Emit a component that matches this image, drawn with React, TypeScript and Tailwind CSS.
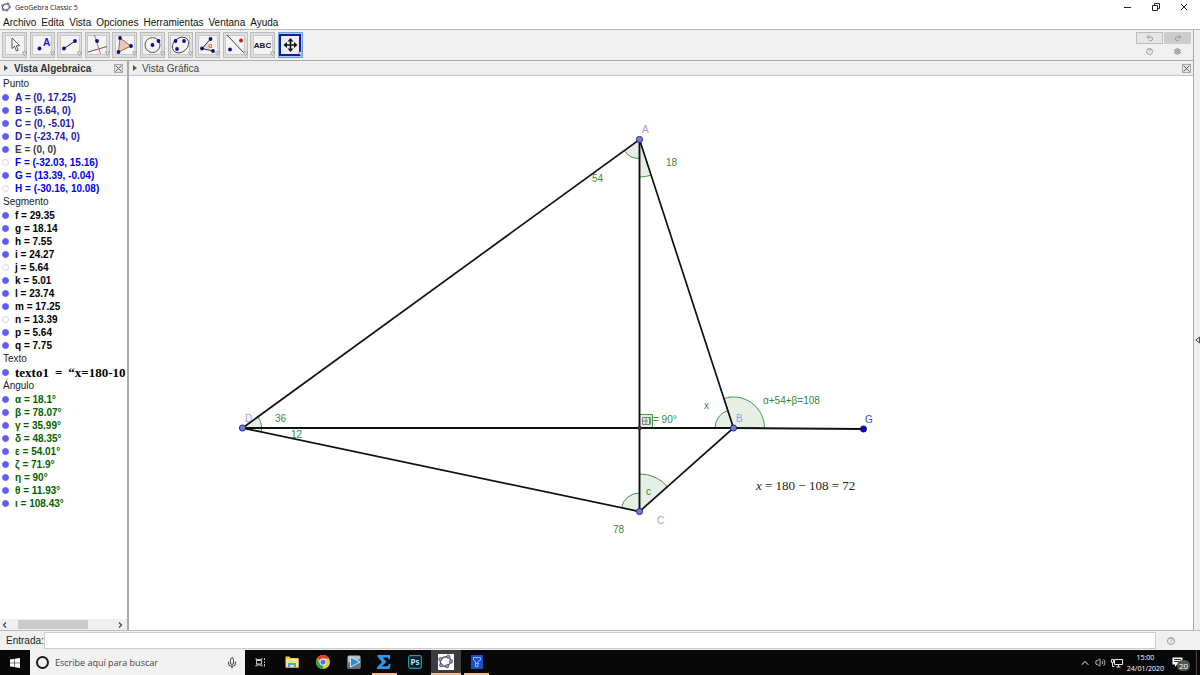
import React from "react";
import { ChevronUp, Mic, Redo2, Settings, Undo2, Volume2 } from "lucide-react";

type Item = { name: string; value: string; hidden?: boolean; color?: string };
type Group = { title: string; color: string; items: Item[] };

const groups: Group[] = [
  {
    title: "Punto",
    color: "text-[#2020a8]",
    items: [
      { name: "A", value: "(0, 17.25)" },
      { name: "B", value: "(5.64, 0)" },
      { name: "C", value: "(0, -5.01)" },
      { name: "D", value: "(-23.74, 0)" },
      { name: "E", value: "(0, 0)", color: "text-[#404040]" },
      { name: "F", value: "(-32.03, 15.16)", hidden: true, color: "text-[#0000f5]" },
      { name: "G", value: "(13.39, -0.04)", color: "text-[#0000f5]" },
      { name: "H", value: "(-30.16, 10.08)", hidden: true, color: "text-[#0000f5]" },
    ],
  },
  {
    title: "Segmento",
    color: "text-black",
    items: [
      { name: "f", value: "29.35" },
      { name: "g", value: "18.14" },
      { name: "h", value: "7.55" },
      { name: "i", value: "24.27" },
      { name: "j", value: "5.64", hidden: true },
      { name: "k", value: "5.01" },
      { name: "l", value: "23.74" },
      { name: "m", value: "17.25" },
      { name: "n", value: "13.39", hidden: true },
      { name: "p", value: "5.64" },
      { name: "q", value: "7.75" },
    ],
  },
  { title: "Texto", color: "text-black", items: [{ name: "texto1", value: "“x=180-10" }] },
  {
    title: "Ángulo",
    color: "text-[#006400]",
    items: [
      { name: "α", value: "18.1°" },
      { name: "β", value: "78.07°" },
      { name: "γ", value: "35.99°" },
      { name: "δ", value: "48.35°" },
      { name: "ε", value: "54.01°" },
      { name: "ζ", value: "71.9°" },
      { name: "η", value: "90°" },
      { name: "θ", value: "11.93°" },
      { name: "ι", value: "108.43°" },
    ],
  },
];

const Dot = ({ x, y, fill = "#0c0c8c" }: { x: number; y: number; fill?: string }) => (
  <circle cx={x} cy={y} r={1.9} fill={fill} />
);

const tools: { label: string; icon: React.ReactNode }[] = [
  {
    label: "Elige y mueve",
    icon: <path d="M10 6v10.5l2.5-2.2 2 4.7 1.8-.8-2-4.5h3.4z" fill="#fff" stroke="#444" strokeWidth={0.9} />,
  },
  {
    label: "Punto",
    icon: (
      <>
        <Dot x={9.5} y={16.5} />
        <text x={13} y={14} fontSize={10} fontWeight={700} fill="#1414ff">A</text>
      </>
    ),
  },
  {
    label: "Recta",
    icon: (
      <>
        <path d="M7 16.5 18 9" stroke="#222" />
        <Dot x={7} y={16.5} />
        <Dot x={18} y={9} />
      </>
    ),
  },
  {
    label: "Perpendicular",
    icon: (
      <>
        <path d="M3 20 22 14.5" stroke="#555" />
        <path d="M9.5 3 15.5 22" stroke="#f06060" />
        <Dot x={12} y={9} />
      </>
    ),
  },
  {
    label: "Polígono",
    icon: (
      <>
        <path d="M8 6 19 14 6.500 20z" fill="#ecc9b4" stroke="#a5674a" />
        <Dot x={8} y={6} />
        <Dot x={19} y={14} />
        <Dot x={6.5} y={20} />
      </>
    ),
  },
  {
    label: "Circunferencia",
    icon: (
      <>
        <circle cx={12.5} cy={13} r={7.5} fill="none" stroke="#444" strokeWidth={0.9} />
        <Dot x={12.5} y={13} />
        <Dot x={18.5} y={9} />
      </>
    ),
  },
  {
    label: "Elipse",
    icon: (
      <>
        <ellipse cx={12.5} cy={13} rx={9} ry={7} transform="rotate(-40 12.500 13)" fill="none" stroke="#444" strokeWidth={0.9} />
        <Dot x={7.5} y={9} />
        <Dot x={16} y={9} />
        <Dot x={9} y={17} />
      </>
    ),
  },
  {
    label: "Ángulo",
    icon: (
      <>
        <path d="M7 16.500 13 10.500Q17 13 15.500 18z" fill="#fbd0d0" />
        <path d="M15.500 7 7 16.500 18 19" fill="none" stroke="#333" />
        <text x={13.5} y={16} fontSize={7} fill="#f03030">α</text>
        <Dot x={15.5} y={7} />
        <Dot x={7} y={16.5} />
        <Dot x={18} y={19} />
      </>
    ),
  },
  {
    label: "Simetría",
    icon: (
      <>
        <path d="M4 3 21 21" stroke="#444" />
        <Dot x={7} y={17.5} />
        <Dot x={18} y={8.5} fill="#c81818" />
      </>
    ),
  },
  {
    label: "Texto",
    icon: <text x={12.5} y={16} fontSize={8} fontWeight={700} textAnchor="middle" fill="#111">ABC</text>,
  },
  {
    label: "Desplaza vista gráfica",
    icon: (
      <path
        d="M12.500 6 15.500 9.500H13.300V12.200H16V10L19.500 13 16 16V13.800H13.300V16.500H15.500L12.500 20 9.500 16.500H11.700V13.800H9V16L5.500 13 9 10V12.200H11.700V9.500H9.500z"
        fill="#111"
      />
    ),
  },
];

function GeoLogo({ className }: { className: string }) {
  return (
    <svg viewBox="0 0 16 16" className={className} aria-hidden="true">
      <ellipse cx="8" cy="8" rx="5.800" ry="4.900" transform="rotate(-25 8 8)" fill="none" stroke="#555" strokeWidth="1.500" />
      {[[11, 2.8], [14, 8], [9.6, 13], [3.4, 12], [2.6, 5.6]].map(([x, y]) => (
        <circle key={x} cx={x} cy={y} r="1.800" fill="#9090e8" stroke="#444" strokeWidth="0.700" />
      ))}
    </svg>
  );
}

function CloseBox({ label }: { label: string }) {
  return (
    <button aria-label={label} className="flex h-[9px] w-[9px] items-center justify-center border border-[#aaa] bg-[#e4e4e4]">
      <svg viewBox="0 0 7 7" className="h-[7px] w-[7px]"><path d="M.5.5l6 6M6.500.5l-6 6" stroke="#666" /></svg>
    </button>
  );
}

function PanelArrow() {
  return <svg viewBox="0 0 4 6" className="h-[6px] w-1 shrink-0" aria-hidden="true"><path d="M0 0 4 3 0 6z" fill="#555" /></svg>;
}

function AlgebraView() {
  return (
    <aside className="flex w-[127px] shrink-0 flex-col bg-white">
      <header className="flex h-[15px] items-center border-b border-[#c4c4c4] bg-[#eee] pl-1 pr-1">
        <PanelArrow />
        <h2 className="ml-1.5 grow whitespace-nowrap font-bold text-[#333]">Vista Algebraica</h2>
        <CloseBox label="Cerrar Vista Algebraica" />
      </header>
      <div className="grow overflow-hidden pt-px">
        {groups.map((g) => (
          <section key={g.title}>
            <h3 className="h-[14px] pl-[3px] leading-[14px] text-[#222]">{g.title}</h3>
            <ul>
              {g.items.map((it) => (
                <li key={it.name} className={`flex h-[13px] items-center whitespace-nowrap font-bold leading-[13px] ${it.color ?? g.color}`}>
                  <span className={`ml-0.5 mr-1.5 h-[7px] w-[7px] shrink-0 rounded-full border ${it.hidden ? "border-[#d4d4d4] bg-white" : "border-[#6464f8] bg-[#5c5cff]"}`} />
                  {g.title === "Texto" ? (
                    <span className="flex gap-1.5 font-['Liberation_Serif',serif] text-[13px]">
                      <span>{it.name}</span>
                      <span>=</span>
                      <span>{it.value}</span>
                    </span>
                  ) : (
                    <span>{it.name} = {it.value}</span>
                  )}
                </li>
              ))}
            </ul>
          </section>
        ))}
      </div>
      <div className="flex h-[11px] items-center bg-[#f0f0f0] px-0.5">
        <svg viewBox="0 0 5 6" className="h-[6px] w-[5px]"><path d="M4 .5 1.500 3 4 5.500" fill="none" stroke="#444" strokeWidth="1.200" /></svg>
        <div className="mx-[11px] h-[9px] grow pr-[19px]"><div className="h-full bg-[#cbcbcb]" /></div>
        <svg viewBox="0 0 5 6" className="mr-0.5 h-[6px] w-[5px]"><path d="M1 .5 3.500 3 1 5.500" fill="none" stroke="#444" strokeWidth="1.200" /></svg>
      </div>
    </aside>
  );
}

function Graph() {
  return (
    <svg className="block h-full w-full" role="img" aria-label="Construcción geométrica" fontSize={10}>
      <g transform="translate(-129 -76)">
        <g fill="#006400" fillOpacity={0.1} stroke="#3f9a48" strokeWidth={1}>
          <path d="M639.500 139.500 624.100 150.700A19 19 0 0 0 639.500 158.500z" />
          <path d="M639.500 139.500V177A37.500 37.500 0 0 0 651.100 175.200z" />
          <path d="M242.500 428 257.900 416.800A19 19 0 0 1 261.100 431.900z" />
          <path d="M639.500 511.500 621.400 507.700A18.500 18.500 0 0 1 639.500 493z" />
          <path d="M639.500 511.500V474A37.500 37.500 0 0 1 667.500 486.600z" />
          <path d="M733.500 428H715A18.500 18.500 0 0 1 727.800 410.400z" />
          <path d="M733.500 428 723.900 398.500A31 31 0 0 1 764.500 428z" />
          <path d="M639.500 414.500H652.500V428H639.500z" />
        </g>
        <g stroke="#111" strokeWidth={1.7} fill="none">
          <path d="M242.500 428 639.500 139.500 733.500 428 639.500 511.500z" />
          <path d="M639.500 139.500V511.500M242.500 428H733.500L863.500 429" strokeWidth={1.9} />
        </g>
        <g fill="#7474f4" stroke="#22224c" strokeWidth={0.9}>
          <circle cx={639.5} cy={139.5} r={3.1} />
          <circle cx={733.5} cy={428} r={3.1} />
          <circle cx={639.5} cy={511.5} r={3.1} />
          <circle cx={242.5} cy={428} r={3.1} />
          <circle cx={863.5} cy={429} r={3.1} fill="#0000f0" />
          <circle cx={639.5} cy={428} r={1.8} fill="#444" />
        </g>
        <g fill="#9c9cf8">
          <text x={642} y={133}>A</text>
          <text x={736} y={422}>B</text>
          <text x={657} y={524}>C</text>
          <text x={245} y={422}>D</text>
          <text x={865} y={423} fill="#4040f0">G</text>
        </g>
        <path d="M642.500 417.500H649.500V424.500H642.500zM642.500 421H648M646 418V424.500" fill="none" stroke="#777" strokeWidth={0.9} />
        <path d="M648 417.500H650.500V424.500" fill="none" stroke="#358a3c" strokeWidth={0.8} />
        <g fill="#358a3c">
          <text x={592} y={182}>54</text>
          <text x={666} y={166}>18</text>
          <text x={275} y={422}>36</text>
          <text x={291} y={438}>12</text>
          <text x={613} y={533}>78</text>
          <text x={704} y={409}>x</text>
          <text x={646} y={495}>c</text>
          <text x={653} y={423}>= 90°</text>
          <text x={763} y={404}>α+54+β=108</text>
        </g>
        <text x={756} y={490} fontSize={13} fill="#222" fontFamily="'Liberation Serif', serif">
          <tspan fontStyle="italic">x</tspan> = 180 − 108 = 72
        </text>
      </g>
    </svg>
  );
}

const taskIcons: { label: string; state?: "open" | "active"; icon: React.ReactNode }[] = [
  {
    label: "Vista de tareas",
    icon: <path d="M3 4v1.500h6V4M3 12.500V11h6v1.500M3.500 6.500h5v3.500h-5zM11.500 4v2M11.500 7.500v1.500M11.500 10v2.500" fill="none" stroke="#ddd" strokeWidth="0.900" />,
  },
  {
    label: "Explorador",
    icon: (
      <>
        <path d="M1.500 2.500h4l1 1.500h8v9.500h-13z" fill="#f4c64e" />
        <path d="M2 5h12.500v8.500H2z" fill="#fce08c" />
        <path d="M4 13.500V9h8v4.500h-2.200v-2.500H6.200v2.500z" fill="#37a9e4" />
      </>
    ),
  },
  {
    label: "Chrome",
    icon: (
      <>
        <circle cx="8" cy="8" r="7" fill="#f5c52c" />
        <path d="M8 8 1.900 4.500A7 7 0 0 1 14.100 4.500H8z" fill="#e0402f" />
        <path d="M8 8 8 15A7 7 0 0 1 1.900 4.500L5 9.700z" fill="#32a350" />
        <circle cx="8" cy="8" r="3.400" fill="#fff" />
        <circle cx="8" cy="8" r="2.600" fill="#3f7fe8" />
      </>
    ),
  },
  {
    label: "Reproductor",
    icon: (
      <>
        <rect x="1.500" y="1.500" width="13" height="13" rx="1.500" fill="#b8bec2" />
        <path d="M1.500 9 14.500 5v9.500h-13z" fill="#69757b" />
        <path d="M4.500 3 14 8 4.500 13z" fill="#2390cf" stroke="#dff2ff" strokeWidth="0.900" />
      </>
    ),
  },
  {
    label: "Sigma",
    state: "open",
    icon: <path d="M1.500 1h12.500v4.200h-1.300L11.500 3.500H6.800L10.500 8l-4.800 4.300h5.800l1.500-2.300H14.700l-1.200 5H1v-1.700L6 8 1.500 2.700z" fill="#2d96e8" />,
  },
  {
    label: "Photoshop",
    icon: (
      <>
        <rect x="1.700" y="1.700" width="12.600" height="12.600" rx="1" fill="#06202e" stroke="#22b6d4" />
        <text x="8" y="11" textAnchor="middle" fontSize="8" fontWeight="700" fill="#a8ecf8">Ps</text>
      </>
    ),
  },
  { label: "GeoGebra", state: "active", icon: null },
  {
    label: "Calculadora",
    state: "open",
    icon: (
      <>
        <rect x="2" y="1" width="12" height="14" fill="#1550c8" />
        <path d="M4.500 6V3.500h7V6L9 7.500V12.500H6.500V7.500zM6 9.500h4" fill="none" stroke="#8fb8ff" />
      </>
    ),
  },
];

function Taskbar() {
  return (
    <footer className="flex h-[25px] shrink-0 bg-[#080808] font-['Open_Sans',sans-serif] text-white">
      <button aria-label="Inicio" className="flex w-[30px] items-center justify-center">
        <svg viewBox="0 0 10 10" className="h-[10px] w-[10px]"><path d="M0 1.400 4.500.8v3.900H0zM5 .7 10 0v4.700H5zM0 5.200h4.500v3.900L0 8.500zM5 5.200h5V10L5 9.300z" fill="#fff" /></svg>
      </button>
      <label className="flex w-[215px] items-center bg-[#f2f2f2] px-[6px]">
        <span className="h-[13px] w-[13px] shrink-0 rounded-full border-2 border-[#1a1a1a]" />
        <input aria-label="Buscar" placeholder="Escribe aquí para buscar" className="ml-[6px] h-4 min-w-0 grow bg-transparent text-[9px] outline-none placeholder:text-[#444]" />
        <Mic className="mr-px h-3 w-3 text-[#444]" />
      </label>
      <nav className="flex w-[247px] pl-px">
        {taskIcons.map((t) => (
          <button
            key={t.label}
            aria-label={t.label}
            className={`flex flex-1 flex-col items-center justify-between ${t.state === "active" ? "bg-[#3c3c3c]" : ""}`}
          >
            <span className="flex w-full grow items-center justify-center">
              {t.state === "active" ? (
                <span className="flex h-4 w-4 items-center justify-center bg-white"><GeoLogo className="h-[15px] w-[15px]" /></span>
              ) : (
                <svg viewBox="0 0 16 16" className="h-4 w-4">{t.icon}</svg>
              )}
            </span>
            <span className={`h-0.5 ${t.state === "active" ? "w-full" : "w-[25px]"} ${t.state ? "bg-[#f3c08c]" : ""}`} />
          </button>
        ))}
      </nav>
      <div className="ml-auto flex items-center">
        <ChevronUp className="mr-1 h-3 w-3" />
        <Volume2 className="mr-[5px] h-[11px] w-[11px]" strokeWidth={1.6} />
        <svg viewBox="0 0 12 10" className="mr-1 h-[10px] w-3"><path d="M3.500 1.500h8v5h-8zM5.500 9h4M7.500 6.500V9M.5 1.500h2v3h-2zM1.500 4.500v4h2" fill="none" stroke="#e8e8e8" /></svg>
        <div className="text-center text-[7px] leading-[11px]"><p>15:00</p><p>24/01/2020</p></div>
        <button aria-label="Notificaciones" className="relative ml-2 h-4 w-[18px]">
          <svg viewBox="0 0 12 11" className="h-[11px] w-3"><path d="M.5.5h10v7H5L3 10V7.500H.5z" fill="#fff" /><path d="M2 2.500h7M2 4.500h7" stroke="#333" /></svg>
          <span className="absolute bottom-0 right-0 flex h-[11px] w-[13px] items-center justify-center rounded-full bg-[#555] text-[8px] leading-[11px]">20</span>
        </button>
        <span className="ml-1.5 h-[25px] w-1 border-l border-[#444]" />
      </div>
    </footer>
  );
}

export default function App() {
  return (
    <div className="flex h-screen flex-col overflow-hidden bg-[#f0f0f0] font-['Liberation_Sans',sans-serif] text-[10px] leading-[13px]">
      <div className="flex h-[14px] shrink-0 items-center bg-white pl-px font-['Open_Sans',sans-serif] text-[7px] text-[#222]">
        <GeoLogo className="h-[10px] w-[10px]" />
        <h1 className="ml-1 grow">GeoGebra Classic 5</h1>
        <div className="flex items-center gap-[20px] pr-3">
          <button aria-label="Minimizar"><svg viewBox="0 0 8 8" className="h-2 w-2"><path d="M0 4.500h7" stroke="#222" /></svg></button>
          <button aria-label="Restaurar"><svg viewBox="0 0 8 8" className="h-2 w-2"><path d="M.5 2.500h5v5h-5zM2.500 2.500v-2h5v5h-2" fill="none" stroke="#222" /></svg></button>
          <button aria-label="Cerrar"><svg viewBox="0 0 8 8" className="h-2 w-2"><path d="M1 1l6 6M7 1 1 7" stroke="#222" /></svg></button>
        </div>
      </div>
      <nav className="flex h-[15px] shrink-0 items-end gap-[5px] bg-white pl-[3px] text-[#111]">
        {["Archivo", "Edita", "Vista", "Opciones", "Herramientas", "Ventana", "Ayuda"].map((m) => (
          <button key={m}>{m}</button>
        ))}
      </nav>

      <div className="flex min-h-0 grow border-t border-[#bbb]">
        <div className="flex min-w-0 grow flex-col">
          <div className="flex h-[31px] shrink-0 items-center justify-between border-b border-[#aaa] pl-0.5 pr-0.5">
            <div className="flex w-[301px] justify-between">
              {tools.map((t, i) => {
                const active = i === tools.length - 1;
                return (
                  <button
                    key={t.label}
                    aria-label={t.label}
                    className={`relative flex h-[26px] w-[25px] items-center justify-center border ${active ? "border-[#6aa0d8] bg-[#a8ccf0]" : "border-[#bcbcbc] bg-[#dedede]"}`}
                  >
                    <span className={active ? "h-[22px] w-[22px] border-2 border-[#1818a0] bg-[#eee]" : "h-5 w-5 border border-[#c8c8c8] bg-[#f4f4f4]"} />
                    <svg viewBox="0 0 25 26" className="absolute -left-px -top-px h-[26px] w-[25px]">
                      {t.icon}
                      <path d="M20.500 20h4l-2 3.500z" fill="#f8f8f8" stroke="#888" strokeWidth={0.7} />
                    </svg>
                  </button>
                );
              })}
            </div>
            <div className="grid grid-cols-2 gap-x-px text-[#999]">
              <button aria-label="Deshacer" className="flex h-3 w-[27px] items-center justify-center border border-[#bbb] bg-[#e6e6e6]"><Undo2 className="h-2 w-2" strokeWidth={3} /></button>
              <button aria-label="Rehacer" className="flex h-3 w-[27px] items-center justify-center bg-[#ccc]"><Redo2 className="h-2 w-2" strokeWidth={3} /></button>
              <button aria-label="Ayuda" className="flex h-[14px] items-center justify-center">
                <span className="flex h-[7px] w-[7px] items-center justify-center rounded-full border border-[#999] text-[6px] leading-[6px]">?</span>
              </button>
              <button aria-label="Preferencias" className="flex h-[14px] items-center justify-center"><Settings className="h-[7px] w-[7px]" strokeWidth={4} /></button>
            </div>
          </div>
          <div className="flex min-h-0 grow">
            <AlgebraView />
            <main className="flex min-w-0 grow flex-col border-l-2 border-[#aaa] bg-white">
              <header className="flex h-[15px] shrink-0 items-center border-b border-[#c4c4c4] bg-[#eee] pl-1 pr-0.5">
                <PanelArrow />
                <h2 className="ml-[5px] grow text-[#444]">Vista Gráfica</h2>
                <CloseBox label="Cerrar Vista Gráfica" />
              </header>
              <div className="min-h-0 grow"><Graph /></div>
            </main>
          </div>
        </div>
        <button aria-label="Mostrar apariencias" className="flex w-[7px] shrink-0 items-center justify-end border-l border-[#aaa] pt-5">
          <svg viewBox="0 0 5 8" className="h-2 w-[5px]"><path d="M4.500 1v6L.8 4z" fill="#ddd" stroke="#555" /></svg>
        </button>
      </div>

      <div className="flex h-[20px] shrink-0 items-center border-t border-[#bbb] pl-1.5">
        <label htmlFor="entrada" className="text-[#222]">Entrada:</label>
        <input id="entrada" className="h-[17px] min-w-0 grow border border-[#ccc] bg-white px-1 outline-none" />
        <button aria-label="Ayuda de entrada" className="flex w-[44px] items-center justify-center pr-3.5">
          <span className="flex h-2 w-2 items-center justify-center rounded-full border border-[#999] text-[7px] leading-[7px] text-[#888]">?</span>
        </button>
      </div>
      <Taskbar />
    </div>
  );
}
